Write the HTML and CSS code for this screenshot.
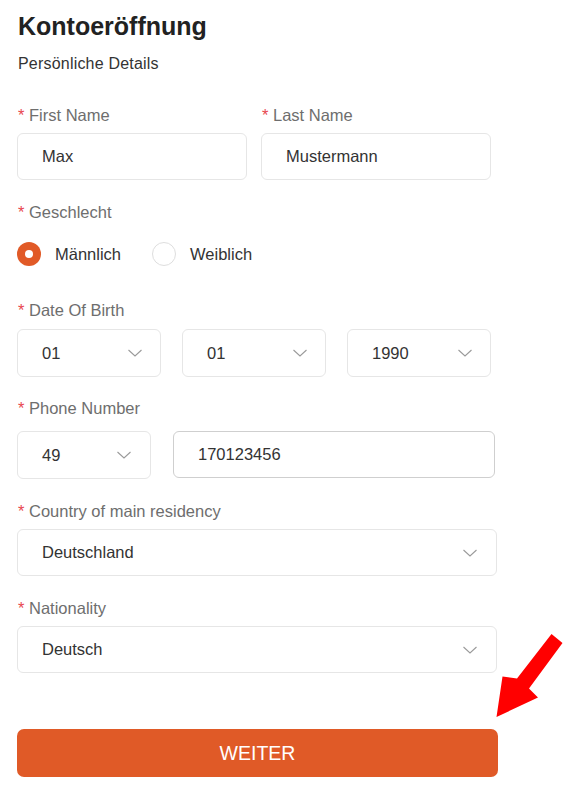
FILE: index.html
```html
<!DOCTYPE html>
<html lang="de">
<head>
<meta charset="utf-8">
<title>Kontoeröffnung</title>
<link rel="stylesheet" href="styles.css">
</head>
<body>
<div class="page">
  <h1 class="title">Kontoeröffnung</h1>
  <div class="subtitle">Persönliche Details</div>

  <div class="row-names first">
    <div class="field">
      <div class="label"><span class="req">*</span> First Name</div>
      <div class="box input">Max</div>
    </div>
    <div class="field">
      <div class="label"><span class="req">*</span> Last Name</div>
      <div class="box input">Mustermann</div>
    </div>
  </div>

  <div class="field gap">
    <div class="label"><span class="req">*</span> Geschlecht</div>
    <div class="radios">
      <div class="radio-opt"><span class="radio checked"></span><span>Männlich</span></div>
      <div class="radio-opt"><span class="radio"></span><span>Weiblich</span></div>
    </div>
  </div>

  <div class="field gap">
    <div class="label label-dob"><span class="req">*</span> Date Of Birth</div>
    <div class="row-dob">
      <div class="box select"><span>01</span><svg class="chev" viewBox="0 0 16 8"><path d="M1.5 1 L8 7 L14.5 1"/></svg></div>
      <div class="box select"><span>01</span><svg class="chev" viewBox="0 0 16 8"><path d="M1.5 1 L8 7 L14.5 1"/></svg></div>
      <div class="box select"><span>1990</span><svg class="chev" viewBox="0 0 16 8"><path d="M1.5 1 L8 7 L14.5 1"/></svg></div>
    </div>
  </div>

  <div class="field gap-phone">
    <div class="label label-wide"><span class="req">*</span> Phone Number</div>
    <div class="row-phone">
      <div class="box select"><span>49</span><svg class="chev" viewBox="0 0 16 8"><path d="M1.5 1 L8 7 L14.5 1"/></svg></div>
      <div class="box input dark">170123456</div>
    </div>
  </div>

  <div class="field gap">
    <div class="label"><span class="req">*</span> Country of main residency</div>
    <div class="box select full"><span>Deutschland</span><svg class="chev" viewBox="0 0 16 8"><path d="M1.5 1 L8 7 L14.5 1"/></svg></div>
  </div>

  <div class="field gap">
    <div class="label"><span class="req">*</span> Nationality</div>
    <div class="box select full"><span>Deutsch</span><svg class="chev" viewBox="0 0 16 8"><path d="M1.5 1 L8 7 L14.5 1"/></svg></div>
  </div>

  <button class="submit" type="button">WEITER</button>
</div>

<svg class="arrow" viewBox="0 0 575 799" width="575" height="799">
  <polygon points="551.5,634 562.5,643 529,688.5 538,697.5 496.5,717 502.5,676.5 517,678.5" fill="#ff0000"/>
</svg>
</body>
</html>
```

FILE: styles.css
```css
html, body {
  margin: 0;
  padding: 0;
  background: #ffffff;
}

body {
  font-family: "Liberation Sans", Arial, sans-serif;
  color: #333333;
  position: relative;
  width: 575px;
  height: 799px;
  overflow: hidden;
}

.page {
  padding: 11px 0 0 17px;
  width: 481px;
  display: flex;
  flex-direction: column;
}

.title {
  margin: 0;
  padding-left: 1px;
  font-size: 25px;
  line-height: 30px;
  font-weight: bold;
  color: #222222;
}

.subtitle {
  margin-top: 12px;
  padding-left: 1px;
  font-size: 16px;
  line-height: 22px;
  color: #333333;
  letter-spacing: 0.2px;
}

.field {
  display: flex;
  flex-direction: column;
}

.gap {
  margin-top: 20px;
}

.gap-phone {
  margin-top: 19px;
}

.label {
  padding-left: 1px;
  font-size: 16.5px;
  line-height: 24px;
  color: #6e6e6e;
  margin-bottom: 6px;
}

.label-dob {
  margin-bottom: 7px;
}

.label-wide {
  margin-bottom: 11px;
}

.req {
  color: #e8474f;
}

.row-names {
  display: grid;
  grid-template-columns: 230px 230px;
  column-gap: 14px;
}

.row-names.first {
  margin-top: 28px;
}

.box {
  box-sizing: border-box;
  border: 1px solid #e6e6e6;
  border-radius: 6px;
  height: 47px;
  padding: 0 18px 0 24px;
  display: flex;
  align-items: center;
  font-size: 16.5px;
  color: #333333;
  background: #ffffff;
}

.box.dark {
  border-color: #cfcfcf;
}

.select {
  justify-content: space-between;
  height: 48px;
}

.select.full {
  height: 47px;
}

.chev {
  width: 16px;
  height: 8px;
  fill: none;
  stroke: #9a9a9a;
  stroke-width: 1.1;
}

.radios {
  display: flex;
  align-items: center;
  gap: 31px;
  height: 48px;
}

.radio-opt {
  display: flex;
  align-items: center;
  gap: 14px;
  font-size: 16.5px;
  color: #333333;
}

.radio {
  box-sizing: border-box;
  width: 24px;
  height: 24px;
  border-radius: 50%;
  border: 1px solid #dedede;
  background: #ffffff;
  display: flex;
  align-items: center;
  justify-content: center;
}

.radio.checked {
  border: none;
  background: #e15a27;
}

.radio.checked::after {
  content: "";
  width: 8px;
  height: 8px;
  border-radius: 50%;
  background: #ffffff;
}

.row-dob {
  display: grid;
  grid-template-columns: 144px 144px 144px;
  column-gap: 21px;
}

.row-dob .select {
  padding-right: 17px;
}

.row-phone {
  display: grid;
  grid-template-columns: 134px 322px;
  column-gap: 22px;
}

.full {
  width: 480px;
}

.submit {
  margin-top: 56px;
  width: 481px;
  height: 48px;
  border: none;
  border-radius: 7px;
  background: #e05a27;
  color: #ffffff;
  font-family: "Liberation Sans", Arial, sans-serif;
  font-size: 19.5px;
  cursor: pointer;
  padding: 0;
}

.arrow {
  position: absolute;
  left: 0;
  top: 0;
  pointer-events: none;
}
```
